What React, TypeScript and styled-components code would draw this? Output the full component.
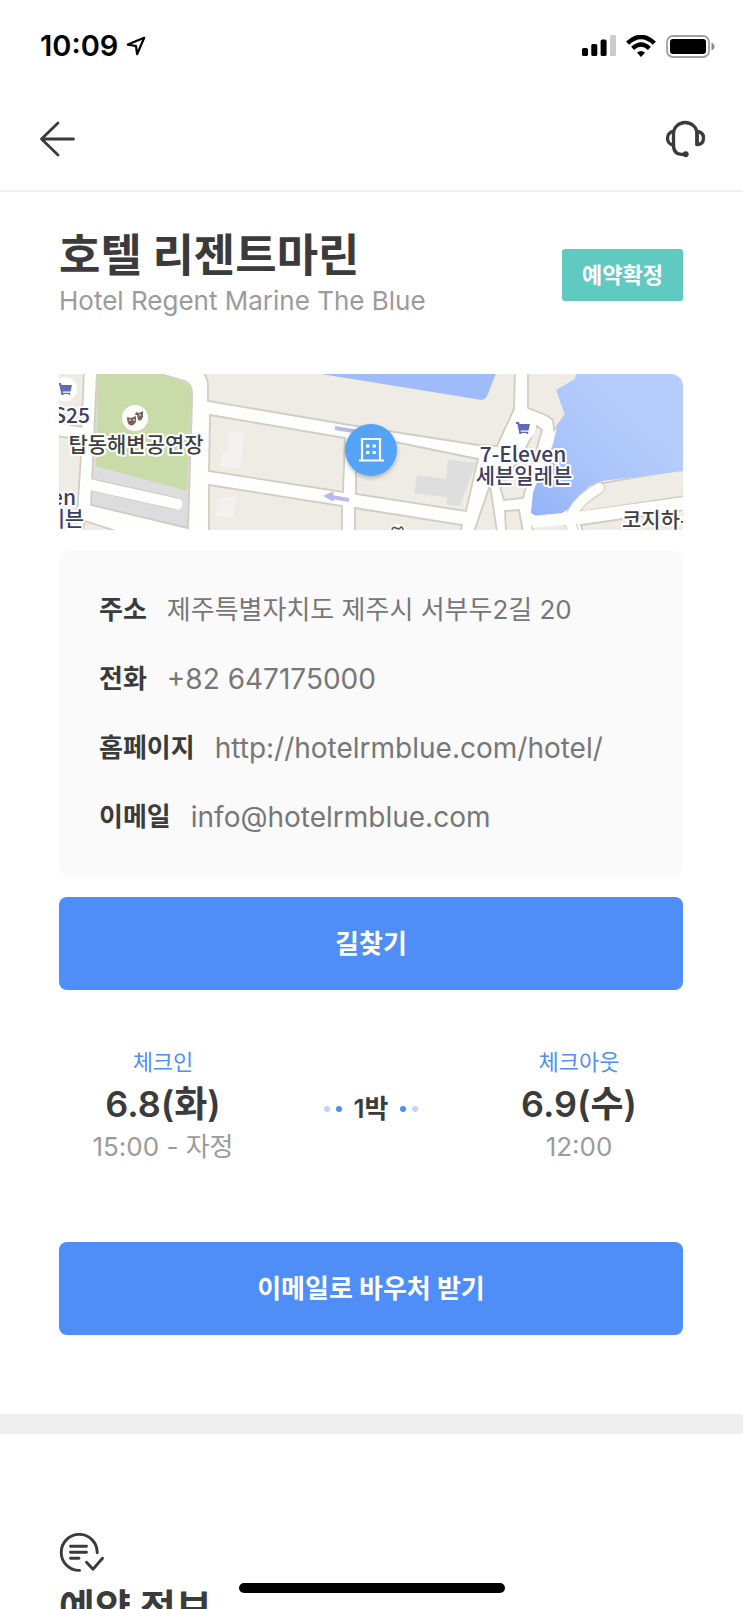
import React from "react";
import styled, { createGlobalStyle } from "styled-components";

const GlobalStyle = createGlobalStyle`
  *, *::before, *::after { box-sizing: border-box; }
  body {
    margin: 0;
    background: #fff;
    color: #3b3b3b;
    font-family: Inter, "Noto Sans CJK KR", sans-serif;
  }
  h1, h2, p, dl, dd, dt { margin: 0; }
`;

const Screen = styled.div`
  position: relative;
  display: flex;
  flex-direction: column;
  height: 100vh;
  overflow: hidden;
`;

const StatusBar = styled.div`
  display: flex;
  flex: none;
  align-items: center;
  justify-content: space-between;
  height: 92px;
  padding: 0 28px 0 40px;
  color: #000;
`;

const Clock = styled.div`
  display: flex;
  align-items: center;
  gap: 8px;
  font-size: 29px;
  font-weight: 600;
  line-height: 36px;
`;

const StatusIcons = styled.div`
  display: flex;
  align-items: center;
  gap: 10px;
`;

const NavBar = styled.header`
  display: flex;
  flex: none;
  align-items: center;
  justify-content: space-between;
  height: 100px;
  padding: 0 36px 4px;
  border-bottom: 2px solid #efefef;
`;

const IconButton = styled.button`
  display: flex;
  padding: 0;
  border: 0;
  background: none;
  color: #3b3b3b;
  cursor: pointer;
`;

const Content = styled.main`
  flex: 1;
  min-height: 0;
  overflow-y: auto;
  scrollbar-width: none;
`;

const Section = styled.section<{ $top: number; $bottom: number }>`
  padding: ${(p) => p.$top}px 60px ${(p) => p.$bottom}px 59px;
`;

const Heading = styled.div`
  display: flex;
  align-items: center;
  justify-content: space-between;
  margin-bottom: 52px;
`;

const HotelName = styled.h1`
  font-size: 45px;
  font-weight: 700;
  line-height: 56px;
`;

const HotelNameEn = styled.p`
  padding-bottom: 4px;
  color: #9b9b9b;
  font-size: 26px;
  line-height: 34px;
`;

const Badge = styled.span`
  padding: 0 20px;
  border-radius: 3px;
  background: #60cac1;
  color: #fff;
  font-size: 22px;
  font-weight: 700;
  line-height: 52px;
`;

const MapFrame = styled.div`
  overflow: hidden;
  margin-bottom: 20px;
  border-radius: 0 12px 0 0;

  svg {
    display: block;
    width: 100%;
    height: auto;
  }
`;

const MapText = styled.text<{ $tone: string }>`
  fill: ${(p) => p.$tone};
  stroke: #fff;
  stroke-width: 4px;
  stroke-linejoin: round;
  paint-order: stroke;
  font-family: "Noto Sans CJK KR", sans-serif;
  font-size: 21px;
  font-weight: 500;
`;

const InfoCard = styled.dl`
  display: flex;
  flex-direction: column;
  gap: 29px;
  margin-bottom: 20px;
  padding: 40px;
  border-radius: 12px;
  background: #fafafa;
`;

const InfoRow = styled.div`
  display: flex;
  gap: 20px;
  font-size: 26px;
  line-height: 40px;
`;

const InfoLabel = styled.dt`
  flex: none;
  font-weight: 700;
`;

const InfoValue = styled.dd`
  color: #777;
`;

const InfoLink = styled.a`
  display: block;
  color: inherit;
  font-size: 28px;
  text-decoration: none;
`;

const PrimaryButton = styled.button`
  display: block;
  width: 100%;
  height: 93px;
  padding: 0 0 5px;
  border: 0;
  border-radius: 8px;
  background: #4f8ef7;
  color: #fff;
  font-family: inherit;
  font-size: 26px;
  font-weight: 700;
  cursor: pointer;
`;

const Stay = styled.div`
  display: grid;
  grid-template-columns: repeat(3, 1fr);
  align-items: center;
  margin: 56px 0 78px;
  text-align: center;
`;

const StayLabel = styled.p`
  color: #4f8ef7;
  font-size: 22px;
  line-height: 32px;
`;

const StayDate = styled.p`
  font-size: 36px;
  font-weight: 600;
  line-height: 52px;
`;

const StayTime = styled.p`
  color: #9b9b9b;
  font-size: 26px;
  line-height: 34px;
`;

const Nights = styled.div`
  display: flex;
  align-items: center;
  justify-content: center;
  gap: 6px;
  padding-top: 8px;
`;

const NightsText = styled.span`
  padding: 0 6px;
  font-size: 26px;
  font-weight: 600;
  line-height: 32px;
`;

const Dot = styled.i<{ $faint?: boolean }>`
  width: 6px;
  height: 6px;
  border-radius: 50%;
  background: ${(p) => (p.$faint ? "#bcd6fb" : "#4f8ef7")};
`;

const Divider = styled.div`
  height: 20px;
  background: #eee;
`;

const SectionTitle = styled.h2`
  margin-top: 12px;
  font-size: 39px;
  font-weight: 700;
  line-height: 48px;
`;

const HomeIndicator = styled.div`
  position: absolute;
  bottom: 16px;
  left: 50%;
  width: 266px;
  height: 10px;
  margin-left: -133px;
  border-radius: 5px;
  background: #000;
`;

const ReservationSvg = styled.svg`
  display: block;
`;

const LocationIcon = () => (
  <svg width="20" height="20" viewBox="0 0 20 20" fill="none" aria-hidden="true">
    <path d="M18.2 1.8 1.8 8.6 10 10 11.1 18.2z" stroke="#000" strokeWidth="2.2" strokeLinejoin="round" />
  </svg>
);

const SignalIcon = () => (
  <svg width="34" height="22" viewBox="0 0 34 22" aria-hidden="true">
    <rect x="0" y="13" width="6" height="8" rx="1.6" />
    <rect x="9.3" y="9" width="6" height="12" rx="1.6" />
    <rect x="18.6" y="4.5" width="6" height="16.5" rx="1.6" />
    <rect x="28" y="0" width="6" height="21" rx="1.6" fill="#ccc" />
  </svg>
);

const WifiIcon = () => (
  <svg width="30" height="22" viewBox="0 0 30 22" fill="none" aria-hidden="true">
    <path d="M1.6 8.2Q15-4.2 28.4 8.2" stroke="#000" strokeWidth="4.4" />
    <path d="M6.6 13.4Q15 5.6 23.4 13.4" stroke="#000" strokeWidth="4.2" />
    <path d="M15 22l-4-4.2q4-3.4 8 0z" fill="#000" />
  </svg>
);

const BatteryIcon = () => (
  <svg width="49" height="23" viewBox="0 0 49 23" aria-hidden="true">
    <rect x="1" y="1" width="42" height="21" rx="6" fill="none" stroke="#a0a0a0" strokeWidth="1.8" />
    <rect x="4" y="4" width="36" height="15" rx="3" />
    <path d="M45.5 7.5c4 1.8 4 6.2 0 8z" fill="#8c8c8c" />
  </svg>
);

const BackIcon = () => (
  <svg width="44" height="44" viewBox="0 0 44 44" fill="none" stroke="currentColor" strokeWidth="2.8" strokeLinecap="round" strokeLinejoin="round">
    <path d="M37.5 22H5.5M22 6 5.5 22 22 38" />
  </svg>
);

const HeadsetIcon = () => (
  <svg width="44" height="44" viewBox="0 0 44 44" fill="none" stroke="currentColor" strokeWidth="3.3" strokeLinecap="round" strokeLinejoin="round">
    <path d="M10.5 28V17C10.5 10 16 5.5 22.2 5.5S34 10 34 17V27.5" />
    <path d="M10.5 14.5C2.5 15 2.5 27.5 10.5 28 10.5 34.5 13.5 37.3 19 37.3H22.5" />
    <path d="M34 14.5C39.5 15 40.5 18.5 40.5 21 40.5 25 38.5 27.5 34 27.5z" />
    <circle cx="22.7" cy="37.3" r="2" fill="currentColor" strokeWidth="2" />
  </svg>
);

const ReservationIcon = () => (
  <ReservationSvg width="46" height="39" viewBox="0 0 46 39" fill="none" stroke="#3b3b3b" strokeWidth="2.9" strokeLinecap="round" strokeLinejoin="round" aria-hidden="true">
    <path d="M20.5 37.4A18 18 0 1 1 38.2 19.8" />
    <path d="M11.5 13.2H27.5M11.5 19.2H27.5M11.5 25.2H20M27.5 29.2 34 36.2 43.5 25.2" />
  </ReservationSvg>
);

const CartGlyph = ({ x, y }: { x: number; y: number }) => (
  <g transform={`translate(${x} ${y})`} fill="#5f6bb5">
    <path d="M-7-6h3l.6 2H7L5.500 2.500h-8l.3 1.300h7.400V6h-1.600v-1h-5v1H-3.600l-2-10H-7z" />
  </g>
);

const StreetMap = () => (
  <svg viewBox="0 0 624 156" role="img" aria-label="호텔 위치 지도">
    <defs>
      <linearGradient id="bay" x1="0" y1="1" x2="0.7" y2="0.3">
        <stop offset="0" stopColor="#94b2f9" />
        <stop offset="0.5" stopColor="#a9c4fa" />
        <stop offset="1" stopColor="#b6cdfb" />
      </linearGradient>
      <filter id="pinShadow" x="-20%" y="-20%" width="140%" height="150%">
        <feDropShadow dx="0" dy="2" stdDeviation="2" floodOpacity="0.25" />
      </filter>
    </defs>
    <rect width="624" height="156" fill="#fefefd" />

    <g fill="#efece6" stroke="#d2cdc2" strokeWidth="1.8">
      <path d="M-3-3H25L22.500 53-3 48z" />
      <path d="M-3 62 23 66 17 158H-3z" />
      <path d="M26 147 60 158H23z" />
      <path d="M143-3Q149 3 149 12V27L291 51 419 71 438 72 455 35 456-3z" />
      <path d="M151 41 286 64 284 118 150 97z" />
      <path d="M150 111 283 132V158H150z" />
      <path d="M297 60 419 85 407 137 297 120z" />
      <path d="M296 134 403 151 401 158H296z" />
      <path d="M431 111 438 158H415z" />
      <path d="M466 76 478 52 483 56 464 124 445 126 441 113z" />
      <path d="M446 137 460 136 464 158H447z" />
      <path d="M469-3V34L487 41 494 46 495 56 506 41 530-3z" />
      <path d="M473 152 508 150 512 158H474z" />
      <path d="M522 151 626 136V158H524z" />
      <path d="M526 112 626 95V122L520 138z" />
    </g>

    <path d="M38-3H91L126 7Q133 10 133 19V30L129 154 32 131z" fill="#dddddf" stroke="#d2cdc2" strokeWidth="1.8" />
    <path d="M39-2H91L125 8Q132 11 132 19V30L128 117 37 92z" fill="#c9dba8" />
    <path d="M34 111 118 130" stroke="#cfcdc9" strokeWidth="13" />
    <path d="M28 110 118 130" stroke="#fefefd" strokeWidth="11" strokeLinecap="round" />
    <path d="M170 59 185 57 181 95 161 92 163 79 168 78z" fill="#f3f2f0" />
    <path d="M160 125 177 121 174 144 156 142z" fill="#f3f2f0" />
    <path d="M389 86 417 89 401 132 388 131V123L355 119 358 101 387 105z" fill="#dedede" />

    <path d="M256-1 423 26Q427 25 429 20L437-1z" fill="#a0bbf9" />
    <path d="M517-1H625V97L544 107 530 112 511 134 500 141 477 142 472 139 474 118 494 70 498 52 506 41 497 16 516 5z" fill="url(#bay)" />

    <path d="M540 114Q513 130 511 148L515 160" fill="none" stroke="#d2cdc2" strokeWidth="12" strokeLinecap="round" />
    <path d="M473 148 525 143 626 129" fill="none" stroke="#fefefd" strokeWidth="12" />
    <path d="M540 114Q513 130 511 148L515 160" fill="none" stroke="#fefefd" strokeWidth="10" strokeLinecap="round" />

    <g stroke="#bbb9e8" strokeWidth="4" fill="#bbb9e8">
      <path d="M276 54 300 58M290 126 272 123" />
      <path d="M274 118V127L265 122z" strokeWidth="1" />
    </g>

    <g fill="#fff">
      <circle cx="6" cy="15" r="12" />
      <circle cx="76" cy="44" r="13" />
      <circle cx="464" cy="53" r="13" />
      <circle cx="339" cy="159" r="9" />
    </g>
    <CartGlyph x={6} y={15} />
    <CartGlyph x={464} y={54} />
    <g fill="#7d6257">
      <path d="M68 43 72 44 77 42V48Q74 53 71 51 68 50 68 43zM77 38 80 39 84 37V43Q82 48 79 46L78 41 76 41z" />
      <path d="M70 46h2M74 46h2M80 41h2" stroke="#fff" strokeWidth="1" />
    </g>
    <path d="M333 156q1-4 4-2t5-1q2 0 2 3" fill="none" stroke="#5a5a5a" strokeWidth="1.6" />

    <MapText $tone="#3d3e63" x="31" y="49" textAnchor="end">GS25</MapText>
    <MapText $tone="#3f3f3f" x="77" y="78" textAnchor="middle">탑동해변공연장</MapText>
    <MapText $tone="#3d3e63" x="17" y="131" textAnchor="end">7-Eleven</MapText>
    <MapText $tone="#3d3e63" x="25" y="152" textAnchor="end">세븐일레븐</MapText>
    <MapText $tone="#3d3e63" x="464" y="88" textAnchor="middle">7-Eleven</MapText>
    <MapText $tone="#3d3e63" x="465" y="109" textAnchor="middle">세븐일레븐</MapText>
    <MapText $tone="#3f3f3f" x="563" y="153">코지하우스</MapText>

    <circle cx="312" cy="76" r="26" fill="#55a3f6" filter="url(#pinShadow)" />
    <path d="M303 86V65H321V86M300 86.500H325" fill="none" stroke="#fff" strokeWidth="2.2" />
    <path d="M307 70.500h3.400v3h-3.400zM313.500 70.500h3.400v3h-3.400zM307 77h3.400v3h-3.400zM313.500 77h3.400v3h-3.400z" fill="#fff" />
  </svg>
);

const contacts = [
  { label: "주소", value: "제주특별자치도 제주시 서부두2길 20" },
  { label: "전화", value: "+82 647175000", href: "tel:+82647175000" },
  { label: "홈페이지", value: "http://hotelrmblue.com/hotel/", href: "http://hotelrmblue.com/hotel/" },
  { label: "이메일", value: "info@hotelrmblue.com", href: "mailto:info@hotelrmblue.com" },
];

export default function App() {
  return (
    <Screen>
      <GlobalStyle />
      <StatusBar>
        <Clock>
          10:09
          <LocationIcon />
        </Clock>
        <StatusIcons>
          <SignalIcon />
          <WifiIcon />
          <BatteryIcon />
        </StatusIcons>
      </StatusBar>
      <NavBar>
        <IconButton type="button" aria-label="뒤로">
          <BackIcon />
        </IconButton>
        <IconButton type="button" aria-label="고객센터">
          <HeadsetIcon />
        </IconButton>
      </NavBar>
      <Content>
        <Section $top={36} $bottom={79}>
          <Heading>
            <div>
              <HotelName>호텔 리젠트마린</HotelName>
              <HotelNameEn>Hotel Regent Marine The Blue</HotelNameEn>
            </div>
            <Badge>예약확정</Badge>
          </Heading>
          <MapFrame>
            <StreetMap />
          </MapFrame>
          <InfoCard>
            {contacts.map((c) => (
              <InfoRow key={c.label}>
                <InfoLabel>{c.label}</InfoLabel>
                <InfoValue>{c.href ? <InfoLink href={c.href}>{c.value}</InfoLink> : c.value}</InfoValue>
              </InfoRow>
            ))}
          </InfoCard>
          <PrimaryButton type="button">길찾기</PrimaryButton>
          <Stay>
            <div>
              <StayLabel>체크인</StayLabel>
              <StayDate>6.8(화)</StayDate>
              <StayTime>15:00 - 자정</StayTime>
            </div>
            <Nights>
              <Dot $faint />
              <Dot />
              <NightsText>1박</NightsText>
              <Dot />
              <Dot $faint />
            </Nights>
            <div>
              <StayLabel>체크아웃</StayLabel>
              <StayDate>6.9(수)</StayDate>
              <StayTime>12:00</StayTime>
            </div>
          </Stay>
          <PrimaryButton type="button">이메일로 바우처 받기</PrimaryButton>
        </Section>
        <Divider />
        <Section $top={99} $bottom={120}>
          <ReservationIcon />
          <SectionTitle>예약 정보</SectionTitle>
        </Section>
      </Content>
      <HomeIndicator />
    </Screen>
  );
}
